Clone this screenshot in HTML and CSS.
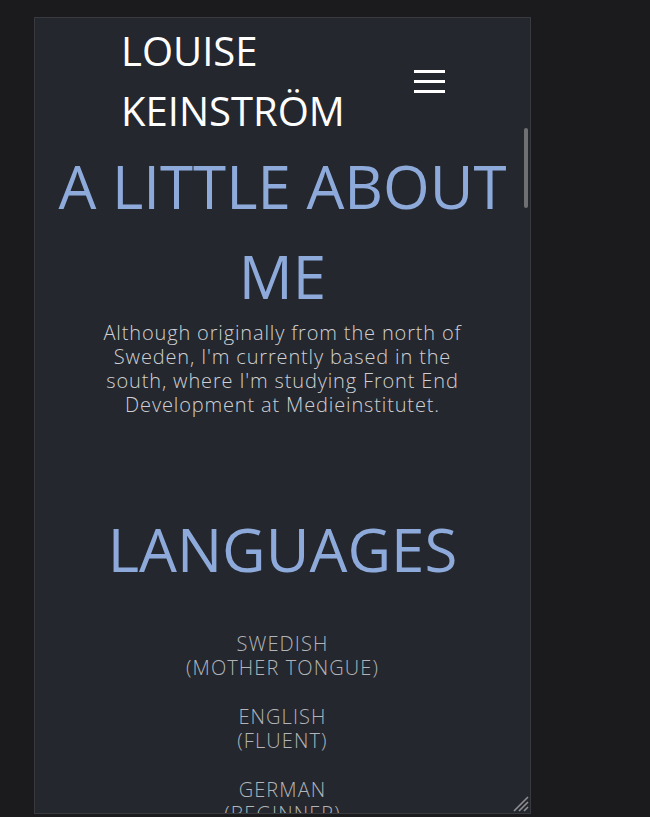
FILE: index.html
```html
<!DOCTYPE html>
<html lang="en">
<head>
<meta charset="utf-8">
<title>Louise Keinström</title>
<link rel="stylesheet" href="styles.css">
</head>
<body>
<div class="frame">
  <header class="topbar">
    <h2 class="name">LOUISE KEINSTRÖM</h2>
    <button class="menu" aria-label="Menu"><span></span><span></span><span></span></button>
  </header>
  <main>
    <section class="about">
      <h1 class="title">A LITTLE ABOUT ME</h1>
      <p class="intro">Although originally from the north of Sweden, I'm currently based in the south, where I'm studying Front End Development at Medieinstitutet.</p>
    </section>
    <section class="languages">
      <h1 class="title">LANGUAGES</h1>
      <ul class="lang-list">
        <li>SWEDISH<br>(MOTHER TONGUE)</li>
        <li>ENGLISH<br>(FLUENT)</li>
        <li>GERMAN<br>(BEGINNER)</li>
      </ul>
    </section>
  </main>
  <div class="scroll-thumb"></div>
  <svg class="grip" width="16" height="16" viewBox="0 0 16 16">
    <path d="M1 15 L15 1 M6 15 L15 6 M11 15 L15 11" stroke="#8d8f93" stroke-width="1.6" fill="none"/>
  </svg>
</div>
</body>
</html>
```
FILE: styles.css
```css
body {
  margin: 0;
  background: #1b1b1d;
}

.frame {
  box-sizing: border-box;
  width: 497px;
  height: 797px;
  margin: 17px 0 0 34px;
  border: 1px solid #383a3f;
  background: #24272e;
  overflow: hidden;
  position: relative;
}

.topbar {
  display: flex;
  justify-content: space-between;
  align-items: center;
  padding: 3px 85px 0 86px;
}

.name {
  margin: 0;
  width: min-content;
  font: 400 40px/60px "Open Sans", sans-serif;
  color: #ffffff;
}

.menu {
  width: 31px;
  height: 23px;
  display: flex;
  flex-direction: column;
  justify-content: space-between;
  background: none;
  border: 0;
  padding: 0;
}

.menu span {
  display: block;
  height: 3px;
  background: #ffffff;
}

.title {
  margin: 0;
  font: 400 60px/90px "Open Sans", sans-serif;
  color: #8daadb;
  text-align: center;
}

.intro {
  margin: 0 auto;
  max-width: 372px;
  font: 300 20px/24px "Open Sans", sans-serif;
  letter-spacing: 0.85px;
  color: #cfd0d3;
  text-align: center;
}

.languages {
  margin-top: 87px;
}

.lang-list {
  list-style: none;
  margin: 38px 0 0;
  padding: 0;
  display: flex;
  flex-direction: column;
  gap: 25px;
  text-align: center;
  font: 300 20px/24px "Open Sans", sans-serif;
  letter-spacing: 1.1px;
  color: #b1b4b9;
}

.scroll-thumb {
  position: absolute;
  top: 110px;
  right: 2px;
  width: 4px;
  height: 80px;
  border-radius: 2px;
  background: #6f7073;
}

.grip {
  position: absolute;
  right: 1px;
  bottom: 1px;
}
```
